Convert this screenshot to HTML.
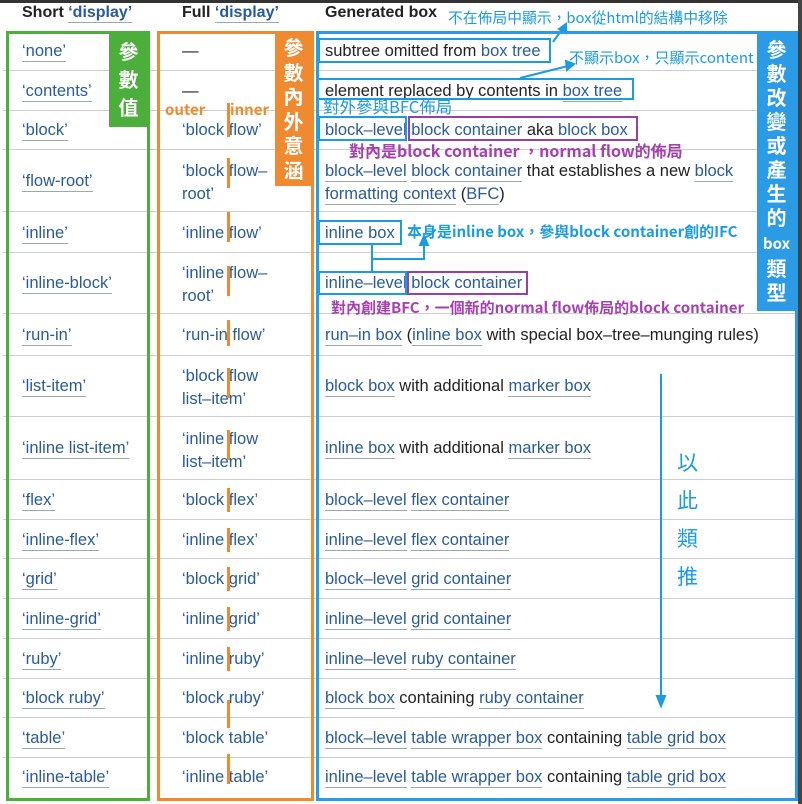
<!DOCTYPE html>
<html><head><meta charset="utf-8"><style>
*{margin:0;padding:0;box-sizing:border-box}
body{width:802px;height:804px;background:#fff;position:relative;overflow:hidden;font-family:"Liberation Sans","Noto Sans CJK TC",sans-serif;font-size:16.5px;color:#222}
.a{position:absolute;white-space:nowrap;line-height:19px}
.l{color:#2a5b96}
.u{border-bottom:1px solid #9aa;padding-bottom:1px}
.hr{position:absolute;left:3px;width:792px;height:1px;background:#cfcfcf}
.bx{position:absolute;border:3px solid}
.ob{position:absolute;width:3px;background:#f08a30}
.nb{position:absolute;border:2px solid #1b9be0}
.pb{position:absolute;border:2px solid #9b3fa8}
.cj{font-family:"Noto Sans CJK TC","WenQuanYi Zen Hei",sans-serif}
.v{position:absolute;color:#fff;font-weight:bold;font-size:20px;line-height:24px;text-align:center}
.bl{color:#1b9be0}.pu{color:#a640b0}
</style></head><body>
<div style="position:absolute;left:0;top:0;width:802px;height:3px;background:#333"></div>
<div style="position:absolute;left:798px;top:0;width:4px;height:804px;background:#444"></div>
<div class="a" style="left:22px;top:3px;font-weight:bold;font-size:16px">Short <span class="l u">‘display’</span></div>
<div class="a" style="left:182px;top:3px;font-weight:bold;font-size:16px">Full <span class="l u">‘display’</span></div>
<div class="a" style="left:325px;top:3px;font-weight:bold;font-size:16px">Generated box</div>

<div class="hr" style="top:70px"></div><div class="hr" style="top:110px"></div><div class="hr" style="top:149px"></div><div class="hr" style="top:211px"></div><div class="hr" style="top:252px"></div><div class="hr" style="top:313px"></div><div class="hr" style="top:355px"></div><div class="hr" style="top:416px"></div><div class="hr" style="top:479px"></div><div class="hr" style="top:519px"></div><div class="hr" style="top:558px"></div><div class="hr" style="top:598px"></div><div class="hr" style="top:638px"></div><div class="hr" style="top:678px"></div><div class="hr" style="top:717px"></div><div class="hr" style="top:757px"></div>

<!-- col1 -->
<div class="a l" style="left:22px;top:42px"><span class="u">‘none’</span></div>
<div class="a l" style="left:22px;top:82px"><span class="u">‘contents’</span></div>
<div class="a l" style="left:22px;top:121px"><span class="u">‘block’</span></div>
<div class="a l" style="left:22px;top:172px"><span class="u">‘flow-root’</span></div>
<div class="a l" style="left:22px;top:224px"><span class="u">‘inline’</span></div>
<div class="a l" style="left:22px;top:274px"><span class="u">‘inline-block’</span></div>
<div class="a l" style="left:22px;top:326px"><span class="u">‘run-in’</span></div>
<div class="a l" style="left:22px;top:377px"><span class="u">‘list-item’</span></div>
<div class="a l" style="left:22px;top:439px"><span class="u">‘inline list-item’</span></div>
<div class="a l" style="left:22px;top:491px"><span class="u">‘flex’</span></div>
<div class="a l" style="left:22px;top:531px"><span class="u">‘inline-flex’</span></div>
<div class="a l" style="left:22px;top:570px"><span class="u">‘grid’</span></div>
<div class="a l" style="left:22px;top:610px"><span class="u">‘inline-grid’</span></div>
<div class="a l" style="left:22px;top:650px"><span class="u">‘ruby’</span></div>
<div class="a l" style="left:22px;top:689px"><span class="u">‘block ruby’</span></div>
<div class="a l" style="left:22px;top:729px"><span class="u">‘table’</span></div>
<div class="a l" style="left:22px;top:768px"><span class="u">‘inline-table’</span></div>

<!-- col2 -->
<div class="a" style="left:182px;top:42px">—</div>
<div class="a" style="left:182px;top:82px">—</div>
<div class="a l" style="left:182px;top:121px">‘block flow’</div>
<div class="a l" style="left:182px;top:160px;line-height:23px">‘block flow–<br>root’</div>
<div class="a l" style="left:182px;top:224px">‘inline flow’</div>
<div class="a l" style="left:182px;top:262px;line-height:23px">‘inline flow–<br>root’</div>
<div class="a l" style="left:182px;top:326px">‘run-in flow’</div>
<div class="a l" style="left:182px;top:365px;line-height:23px">‘block flow<br>list–item’</div>
<div class="a l" style="left:182px;top:428px;line-height:23px">‘inline flow<br>list–item’</div>
<div class="a l" style="left:182px;top:491px">‘block flex’</div>
<div class="a l" style="left:182px;top:531px">‘inline flex’</div>
<div class="a l" style="left:182px;top:570px">‘block grid’</div>
<div class="a l" style="left:182px;top:610px">‘inline grid’</div>
<div class="a l" style="left:182px;top:650px">‘inline ruby’</div>
<div class="a l" style="left:182px;top:689px">‘block ruby’</div>
<div class="a l" style="left:182px;top:729px">‘block table’</div>
<div class="a l" style="left:182px;top:768px">‘inline table’</div>
<div class="ob" style="left:227px;top:103px;height:34px"></div>
<div class="ob" style="left:227px;top:158px;height:30px"></div>
<div class="ob" style="left:227px;top:212px;height:30px"></div>
<div class="ob" style="left:227px;top:266px;height:30px"></div>
<div class="ob" style="left:227px;top:320px;height:26px"></div>
<div class="ob" style="left:227px;top:368px;height:30px"></div>
<div class="ob" style="left:227px;top:430px;height:30px"></div>
<div class="ob" style="left:227px;top:488px;height:24px"></div>
<div class="ob" style="left:227px;top:528px;height:24px"></div>
<div class="ob" style="left:227px;top:567px;height:24px"></div>
<div class="ob" style="left:227px;top:607px;height:24px"></div>
<div class="ob" style="left:227px;top:647px;height:24px"></div>
<div class="ob" style="left:227px;top:700px;height:28px"></div>
<div class="ob" style="left:227px;top:754px;height:30px"></div>
<div class="a cj" style="left:165px;top:100px;color:#f08a30;font-weight:bold;font-size:15px">outer</div>
<div class="a cj" style="left:230px;top:100px;color:#f08a30;font-weight:bold;font-size:15px">inner</div>

<!-- col3 -->
<div class="a" style="left:325px;top:42px">subtree omitted from <span class="l">box tree</span></div>
<div class="a" style="left:325px;top:82px">element replaced by contents in <span class="l u">box tree</span></div>
<div class="a" style="left:325px;top:121px"><span class="l">block–level</span> <span class="l">block container</span> <span class="u">aka</span> <span class="l">block box</span></div>
<div class="a" style="left:325px;top:160px;line-height:23px"><span class="l u">block–level</span> <span class="l u">block container</span> that establishes a new <span class="l u">block</span><br><span class="l u">formatting context</span> (<span class="l u">BFC</span>)</div>
<div class="a l" style="left:325px;top:224px">inline box</div>
<div class="a" style="left:325px;top:274px"><span class="l">inline–level</span> <span class="l">block container</span></div>
<div class="a" style="left:325px;top:326px"><span class="l u">run–in box</span> (<span class="l u">inline box</span> with special box–tree–munging rules)</div>
<div class="a" style="left:325px;top:377px"><span class="l u">block box</span> with additional <span class="l u">marker box</span></div>
<div class="a" style="left:325px;top:439px"><span class="l u">inline box</span> with additional <span class="l u">marker box</span></div>
<div class="a" style="left:325px;top:491px"><span class="l u">block–level</span> <span class="l u">flex container</span></div>
<div class="a" style="left:325px;top:531px"><span class="l u">inline–level</span> <span class="l u">flex container</span></div>
<div class="a" style="left:325px;top:570px"><span class="l u">block–level</span> <span class="l u">grid container</span></div>
<div class="a" style="left:325px;top:610px"><span class="l u">inline–level</span> <span class="l u">grid container</span></div>
<div class="a" style="left:325px;top:650px"><span class="l u">inline–level</span> <span class="l u">ruby container</span></div>
<div class="a" style="left:325px;top:689px"><span class="l u">block box</span> containing <span class="l u">ruby container</span></div>
<div class="a" style="left:325px;top:729px"><span class="l u">block–level</span> <span class="l u">table wrapper box</span> containing <span class="l u">table grid box</span></div>
<div class="a" style="left:325px;top:768px"><span class="l u">inline–level</span> <span class="l u">table wrapper box</span> containing <span class="l u">table grid box</span></div>

<!-- annotation boxes -->
<div class="nb" style="left:318px;top:38px;width:233px;height:25px"></div>
<div class="nb" style="left:316px;top:78px;width:318px;height:22px"></div>
<div class="nb" style="left:318px;top:116px;width:89px;height:25px"></div>
<div class="pb" style="left:408px;top:116px;width:230px;height:25px"></div>
<div class="nb" style="left:318px;top:220px;width:84px;height:25px"></div>
<div class="nb" style="left:318px;top:271px;width:89px;height:24px"></div>
<div class="pb" style="left:407px;top:271px;width:121px;height:24px"></div>
<svg style="position:absolute;left:0;top:0" width="802" height="804">
<g stroke="#1b9be0" stroke-width="2" fill="#1b9be0">
<line x1="553" y1="42" x2="563" y2="28"/><polygon points="566,24 566,33 559,29"/>
<line x1="520" y1="78" x2="568" y2="66"/><polygon points="574,64 566,61 567,70"/>
<polyline points="372,245 372,259 424,259 424,245" fill="none"/><polygon points="424,236 420,245 428,245"/>
<line x1="372" y1="259" x2="372" y2="271"/>
<line x1="661" y1="374" x2="661" y2="698"/><polygon points="657,696 665,696 661,706"/>
</g></svg>
<div class="a cj bl" style="left:448px;top:8px;font-size:14.8px">不在佈局中顯示，box從html的結構中移除</div>
<div class="a cj bl" style="left:569px;top:48px;font-size:15px">不顯示box，只顯示content</div>
<div class="a cj bl" style="left:323px;top:96px;font-size:16.5px;line-height:20px">對外參與BFC佈局</div>
<div class="a cj pu" style="left:349px;top:141px;font-size:16px;font-weight:bold">對內是block container ，normal flow的佈局</div>
<div class="a cj bl" style="left:407px;top:222px;font-size:15px;font-weight:bold">本身是inline box，參與block container創的IFC</div>
<div class="a cj pu" style="left:331px;top:298px;font-size:15px;font-weight:bold">對內創建BFC，一個新的normal flow佈局的block container</div>
<div class="a cj bl" style="left:677px;top:443px;font-size:21px;line-height:38px;white-space:normal;width:24px">以此類推</div>

<!-- big boxes -->
<div class="bx" style="left:6px;top:31px;width:144px;height:770px;border-color:#4caf3c"></div>
<div class="bx" style="left:157px;top:31px;width:157px;height:770px;border-color:#f08a30"></div>
<div class="bx" style="left:316px;top:31px;width:482px;height:770px;border-color:#2b9be6"></div>
<div class="v cj" style="left:109px;top:31px;width:39px;height:96px;background:#4caf3c;padding-top:6px;line-height:28px">參數值</div>
<div class="v cj" style="left:275px;top:31px;width:37px;height:155px;background:#f08a30;padding-top:4px;line-height:24.5px">參數內外意涵</div>
<div class="v cj" style="left:757px;top:31px;width:39px;height:280px;background:#2b9be6;padding-top:6px;line-height:24px">參數改變或產生的<span style="font-size:15px">box</span>類型</div>
</body></html>
